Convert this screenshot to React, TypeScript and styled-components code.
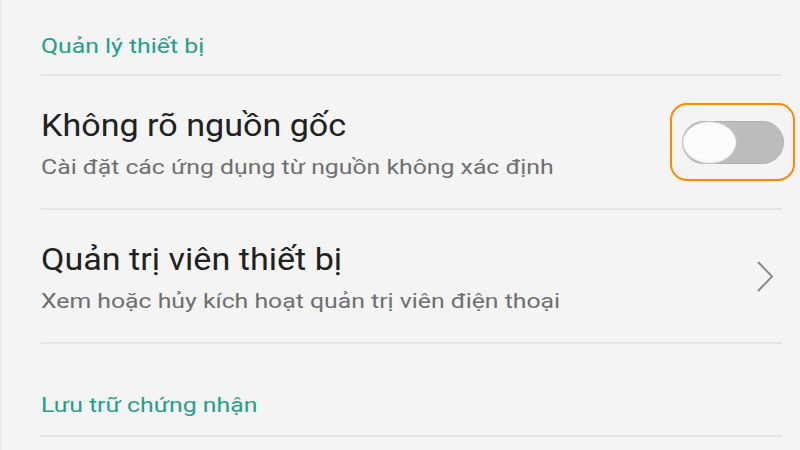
import { createGlobalStyle, styled } from "styled-components";

const GlobalStyle = createGlobalStyle`
  html, body {
    margin: 0;
    padding: 0;
    background: #f4f4f4;
  }
  body {
    font-family: Roboto, "Noto Sans", sans-serif;
  }
`;

const Page = styled.div`
  width: 800px;
  height: 450px;
  box-sizing: border-box;
  padding: 0 18px 0 40px;
  background: #f4f4f4;
  border-left: 1px solid #e6e6e6;
  overflow: hidden;
`;

// the screenshot's type is set a little wide; scaleX keeps the heights
const SectionHeader = styled.div<{ $top: number; $bottom: number }>`
  padding-top: ${(p) => p.$top}px;
  padding-bottom: ${(p) => p.$bottom}px;
  border-bottom: 2px solid #e4e4e4;
  color: #23a08a;
  font-size: 20.5px;
  line-height: 30px;

  span {
    display: inline-block;
    white-space: nowrap;
    transform: scaleX(1.21);
    transform-origin: left center;
  }
`;

const Row = styled.div`
  display: flex;
  align-items: center;
  justify-content: space-between;
  border-bottom: 2px solid #e4e4e4;
`;

const TextBlock = styled.div`
  display: flex;
  flex-direction: column;
  align-items: flex-start;
  padding: 30px 0 20px;
`;

const Title = styled.div`
  color: #212121;
  font-size: 31px;
  line-height: 40px;
  white-space: nowrap;
  transform: scaleX(1.1);
  transform-origin: left center;
`;

const Subtitle = styled.div`
  color: #6f6f6f;
  font-size: 20px;
  line-height: 42px;
  white-space: nowrap;
  transform: scaleX(1.24);
  transform-origin: left center;
`;

const Highlight = styled.div`
  box-sizing: border-box;
  width: 125px;
  height: 78px;
  margin-right: -13px;
  border: 2.5px solid #ff8a00;
  border-radius: 17px;
  display: flex;
  align-items: center;
  justify-content: center;
  padding-left: 1px;
`;

const Track = styled.div<{ $on: boolean }>`
  box-sizing: border-box;
  width: 102px;
  height: 43px;
  border-radius: 22px;
  background: ${(p) => (p.$on ? "#23a08a" : "#bcbcbc")};
  border: 1px solid #b0b0b0;
  display: flex;
  align-items: center;
`;

const Knob = styled.div`
  box-sizing: border-box;
  width: 55px;
  height: 43px;
  margin-left: -1px;
  border-radius: 50%;
  background: #fbfbfb;
  border: 1.5px solid #c4c4c4;
  box-shadow: inset 0 -1px 2px rgba(0, 0, 0, 0.06);
`;

const Chevron = styled.svg`
  width: 18px;
  height: 33px;
  margin-right: 8px;
  flex-shrink: 0;
`;

function Toggle({ on }: { on: boolean }) {
  return (
    <Highlight>
      <Track $on={on}>
        <Knob />
      </Track>
    </Highlight>
  );
}

export default function App() {
  return (
    <>
      <GlobalStyle />
      <Page>
        <SectionHeader $top={31} $bottom={13}>
          <span>Quản lý thiết bị</span>
        </SectionHeader>
        <Row>
          <TextBlock>
            <Title>Không rõ nguồn gốc</Title>
            <Subtitle>Cài đặt các ứng dụng từ nguồn không xác định</Subtitle>
          </TextBlock>
          <Toggle on={false} />
        </Row>
        <Row>
          <TextBlock>
            <Title>Quản trị viên thiết bị</Title>
            <Subtitle>Xem hoặc hủy kích hoạt quản trị viên điện thoại</Subtitle>
          </TextBlock>
          <Chevron viewBox="0 0 18 33">
            <path d="M2 2 L16 16.5 L2 31" fill="none" stroke="#8a8a8a" strokeWidth="2" />
          </Chevron>
        </Row>
        <SectionHeader $top={46} $bottom={15}>
          <span>Lưu trữ chứng nhận</span>
        </SectionHeader>
      </Page>
    </>
  );
}
